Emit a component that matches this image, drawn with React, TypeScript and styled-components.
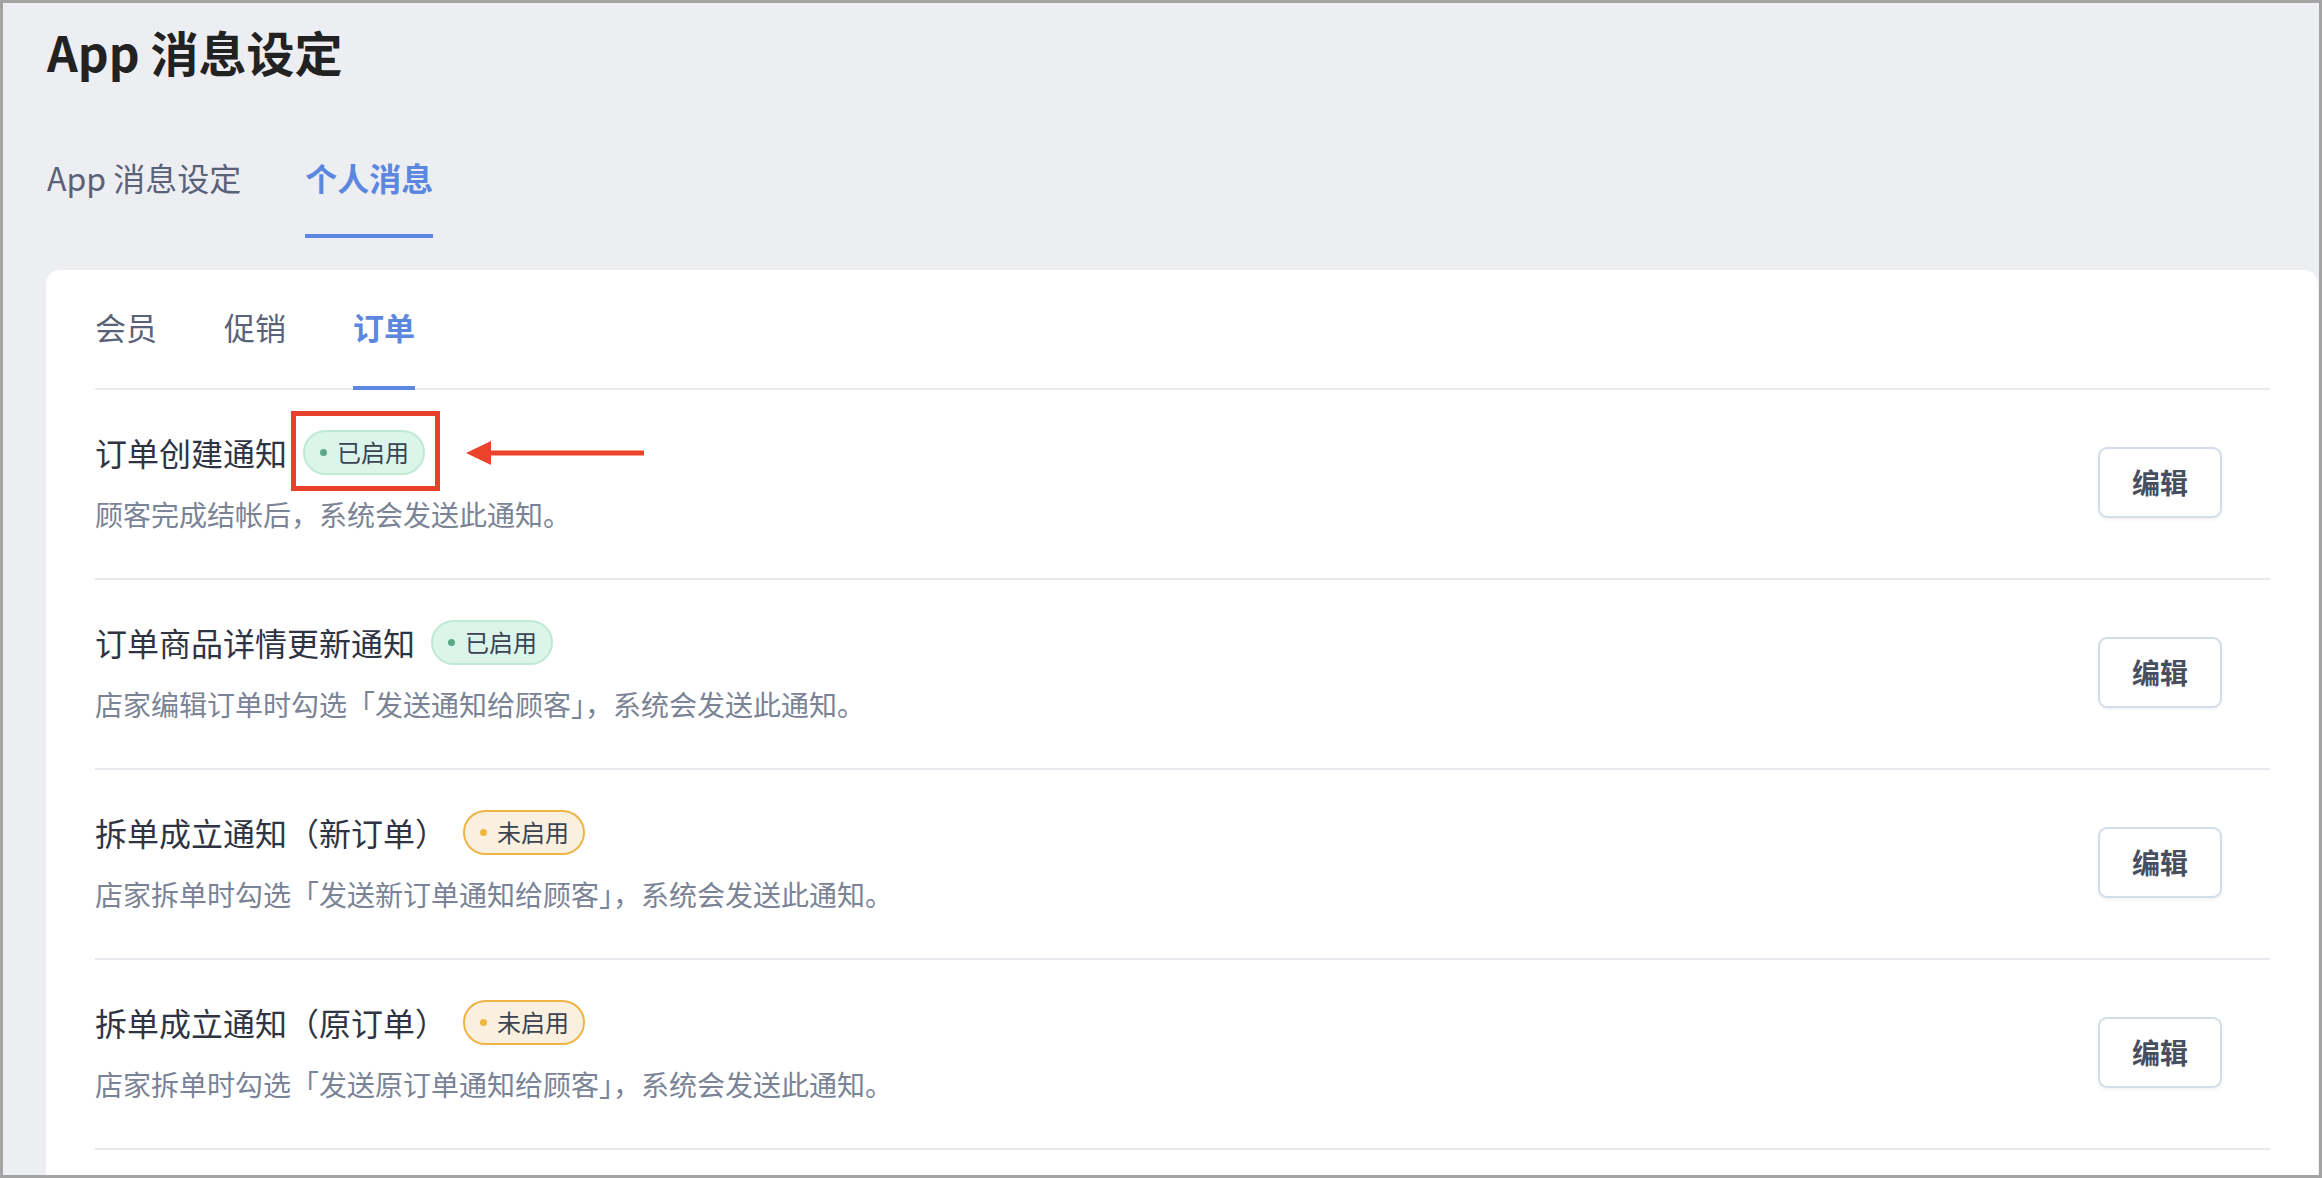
import styled, { createGlobalStyle } from "styled-components";

const GlobalStyle = createGlobalStyle`
  html, body {
    margin: 0;
    padding: 0;
    background: #edeef1;
  }
  * {
    box-sizing: border-box;
  }
  body {
    font-family: "Noto Sans CJK SC", "Noto Sans", sans-serif;
  }
`;

const Frame = styled.div`
  width: 2322px;
  height: 1178px;
  border: 3px solid #a3a3a4;
  background-color: #edeef1;
  overflow: hidden;
  display: flex;
  flex-direction: column;
`;

const Header = styled.header`
  padding: 12px 0 0 44px;
`;

const PageTitle = styled.h1`
  margin: 0;
  font-size: 48px;
  line-height: 72px;
  font-weight: 700;
  color: #222222;
`;

const TopTabs = styled.nav`
  display: flex;
  gap: 64px;
  margin-top: 66px;
`;

const TopTab = styled.div<{ active?: boolean }>`
  font-size: 32px;
  line-height: 48px;
  padding-bottom: 33px;
  border-bottom: 4px solid
    ${(props) => (props.active ? "#5b87e0" : "transparent")};
  color: ${(props) => (props.active ? "#5b87e0" : "#5a6279")};
  font-weight: ${(props) => (props.active ? 700 : 400)};
`;

const Card = styled.section`
  margin: 32px 1px 0 43px;
  flex-grow: 1;
  background-color: #ffffff;
  border-radius: 14px 14px 0 0;
  padding: 0 48px 0 49px;
`;

const SubTabs = styled.div`
  display: flex;
  gap: 67px;
  padding-top: 34px;
  border-bottom: 2px solid #ebecee;
`;

const SubTab = styled.div<{ active?: boolean }>`
  font-size: 31px;
  line-height: 46px;
  padding-bottom: 36px;
  margin-bottom: -2px;
  border-bottom: 4px solid
    ${(props) => (props.active ? "#5b87e0" : "transparent")};
  color: ${(props) => (props.active ? "#5b87e0" : "#5a6279")};
  font-weight: ${(props) => (props.active ? 700 : 400)};
`;

const Row = styled.div`
  display: flex;
  justify-content: space-between;
  align-items: center;
  padding: 39px 48px 43px 0;
  border-bottom: 2px solid #e6e9ee;
`;

const Info = styled.div`
  display: flex;
  flex-direction: column;
`;

const RowHead = styled.div`
  display: flex;
  align-items: center;
  gap: 16px;
  height: 46px;
`;

const RowTitle = styled.span`
  font-size: 32px;
  line-height: 46px;
  color: #2f3443;
`;

const Description = styled.p`
  margin: 18px 0 0;
  font-size: 28px;
  line-height: 42px;
  color: #7b8396;
`;

const Badge = styled.span<{ on: boolean }>`
  position: relative;
  display: inline-flex;
  align-items: center;
  gap: 10px;
  height: 45px;
  padding: 0 14px 0 15px;
  border-radius: 23px;
  border: 2px solid ${(props) => (props.on ? "#bfe9d5" : "#eeb446")};
  background-color: ${(props) => (props.on ? "#dbf5ea" : "#faf0e0")};
  font-size: 24px;
  line-height: 1;
  color: #3d4351;
`;

const Dot = styled.i<{ on: boolean }>`
  width: 7px;
  height: 7px;
  border-radius: 50%;
  background-color: ${(props) => (props.on ? "#5aa884" : "#f0b63f")};
`;

const Highlight = styled.span`
  position: absolute;
  left: -14px;
  top: -21px;
  width: 149px;
  height: 80px;
  border: 5px solid #e8402a;
  pointer-events: none;
`;

const Arrow = styled.svg`
  position: absolute;
  left: 161px;
  top: 9px;
`;

const EditButton = styled.button`
  width: 124px;
  height: 71px;
  border: 2px solid #d4dde7;
  border-radius: 9px;
  background-color: #ffffff;
  box-shadow: 0 2px 3px rgba(16, 24, 40, 0.05);
  font-family: "Noto Sans CJK SC", sans-serif;
  font-size: 28px;
  font-weight: 700;
  color: #474e5d;
  cursor: pointer;
`;

interface INotice {
  title: string;
  desc: string;
  enabled: boolean;
  marked?: boolean;
}

const notices: INotice[] = [
  {
    title: "订单创建通知",
    desc: "顾客完成结帐后，系统会发送此通知。",
    enabled: true,
    marked: true,
  },
  {
    title: "订单商品详情更新通知",
    desc: "店家编辑订单时勾选「发送通知给顾客」，系统会发送此通知。",
    enabled: true,
  },
  {
    title: "拆单成立通知（新订单）",
    desc: "店家拆单时勾选「发送新订单通知给顾客」，系统会发送此通知。",
    enabled: false,
  },
  {
    title: "拆单成立通知（原订单）",
    desc: "店家拆单时勾选「发送原订单通知给顾客」，系统会发送此通知。",
    enabled: false,
  },
];

const NoticeRow = ({ title, desc, enabled, marked }: INotice) => (
  <Row>
    <Info>
      <RowHead>
        <RowTitle>{title}</RowTitle>
        <Badge on={enabled}>
          <Dot on={enabled} />
          {enabled ? "已启用" : "未启用"}
          {marked && (
            <>
              <Highlight />
              <Arrow width="180" height="24" viewBox="0 0 180 24">
                <polygon points="0,12 25,0 25,24" fill="#ea4329" />
                <rect x="22" y="9.5" width="156" height="5" fill="#ea4329" />
              </Arrow>
            </>
          )}
        </Badge>
      </RowHead>
      <Description>{desc}</Description>
    </Info>
    <EditButton>编辑</EditButton>
  </Row>
);

const App = () => {
  return (
    <>
      <GlobalStyle />
      <Frame>
        <Header>
          <PageTitle>App 消息设定</PageTitle>
          <TopTabs>
            <TopTab>App 消息设定</TopTab>
            <TopTab active>个人消息</TopTab>
          </TopTabs>
        </Header>
        <Card>
          <SubTabs>
            <SubTab>会员</SubTab>
            <SubTab>促销</SubTab>
            <SubTab active>订单</SubTab>
          </SubTabs>
          {notices.map((n) => (
            <NoticeRow key={n.title} {...n} />
          ))}
        </Card>
      </Frame>
    </>
  );
};

export default App;
